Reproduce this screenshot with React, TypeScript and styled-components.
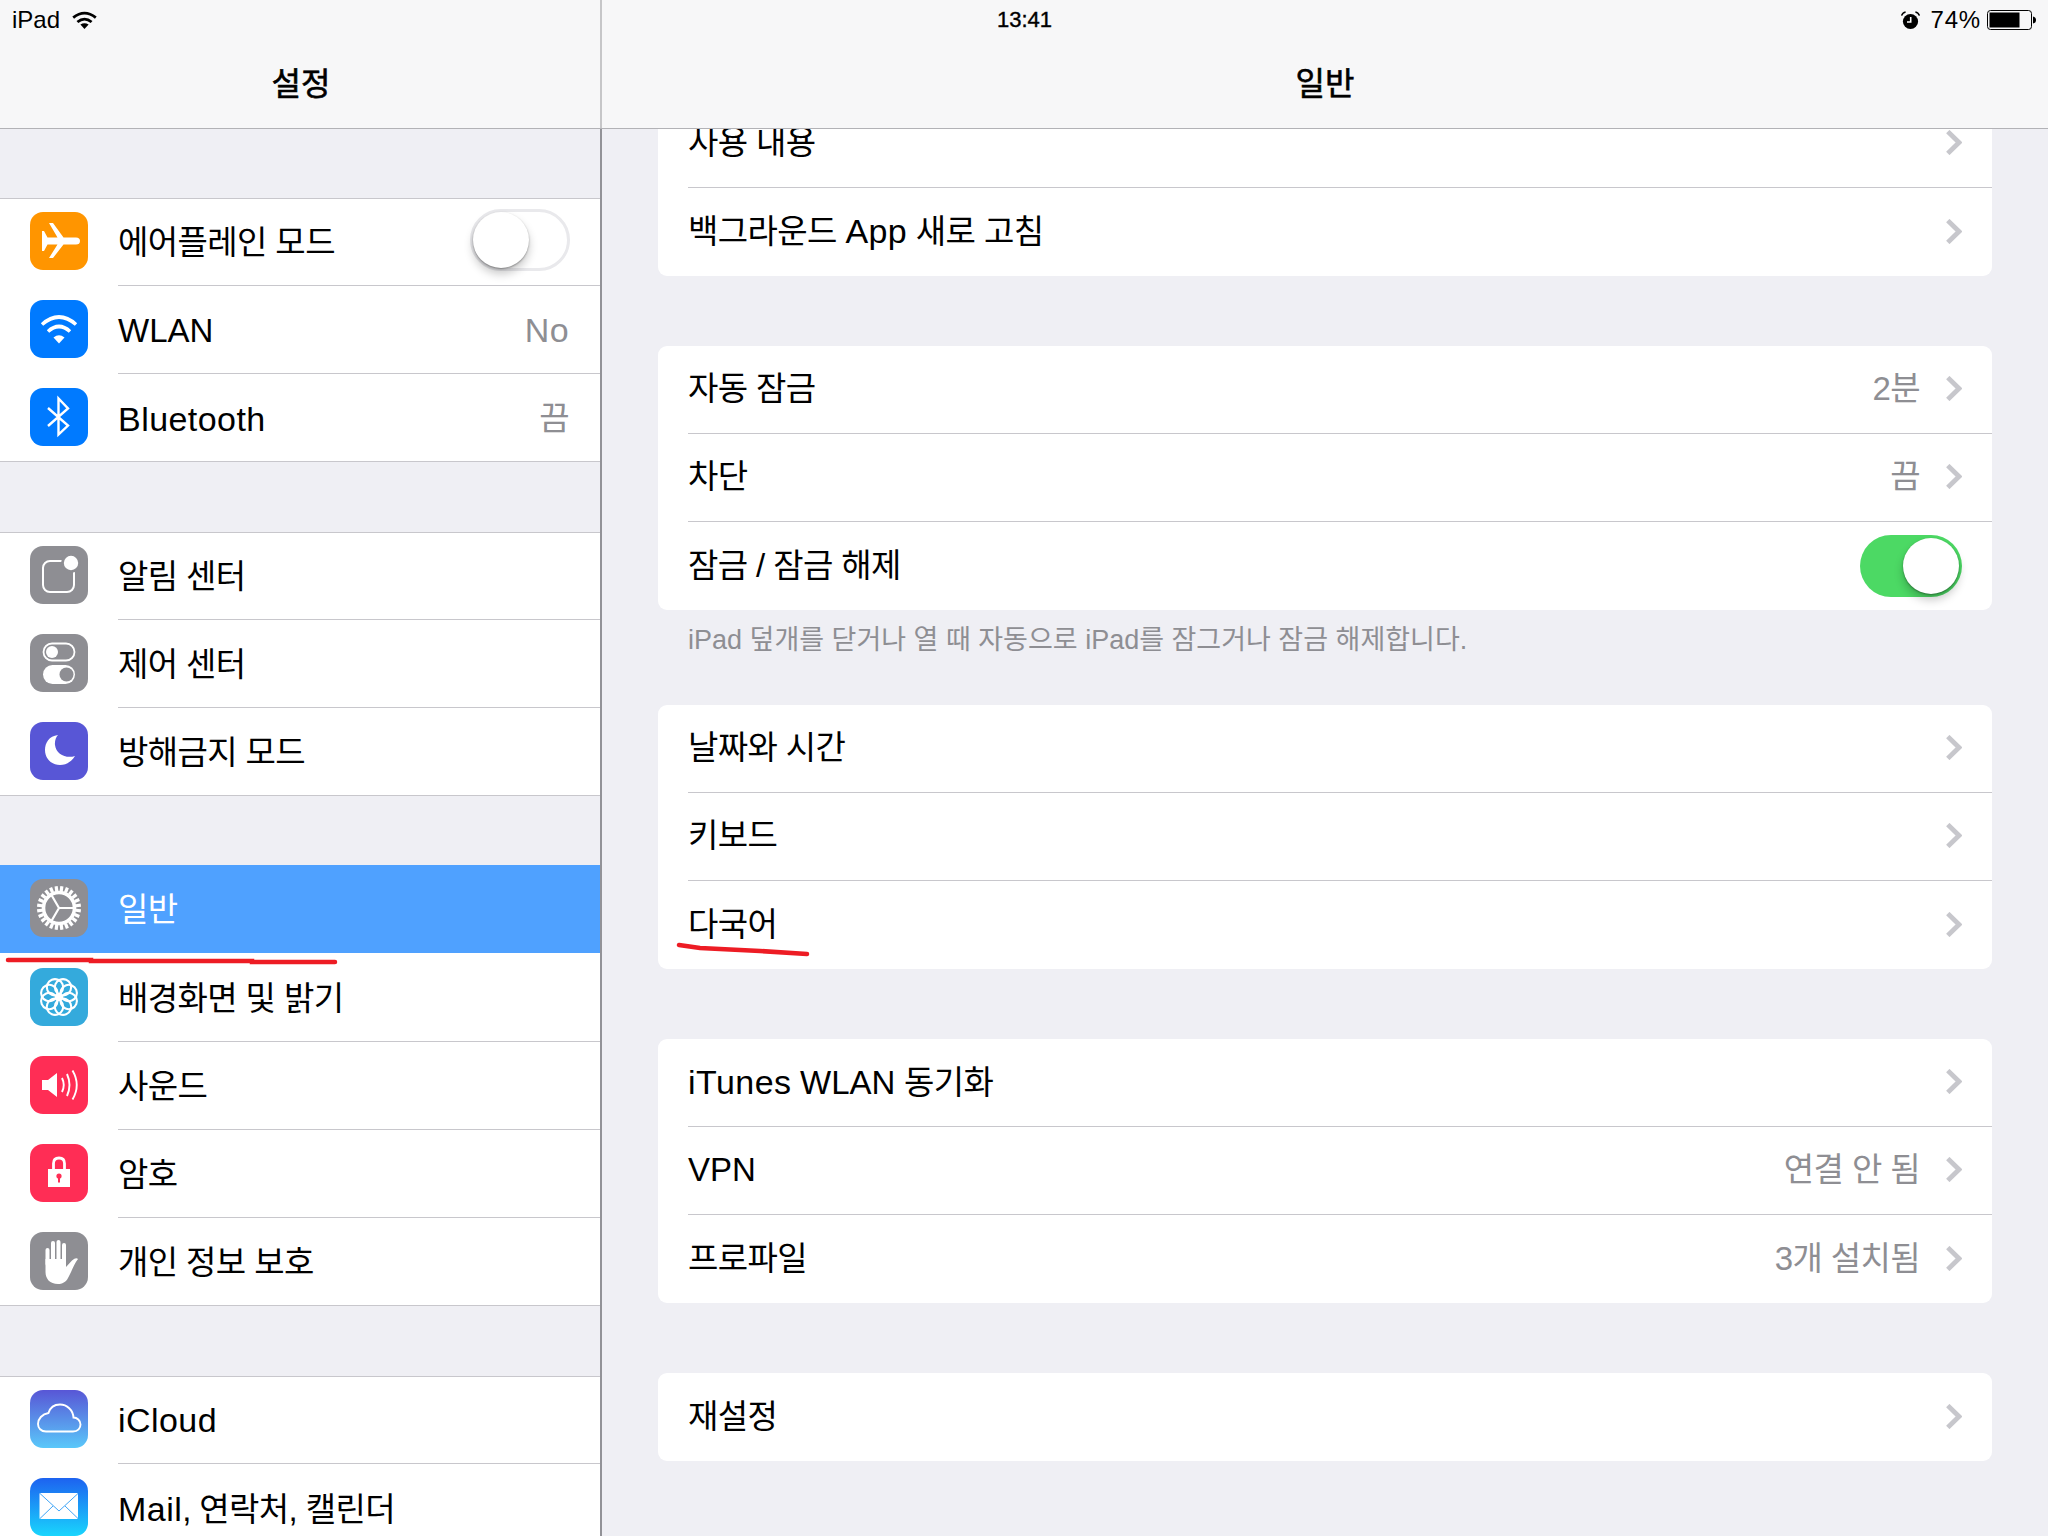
import { ReactNode } from "react"
import styled, { createGlobalStyle } from "styled-components"

const FONT = `"Liberation Sans", "Noto Sans CJK KR", sans-serif`

const GlobalStyle = createGlobalStyle`
  html, body {
    margin: 0;
    padding: 0;
    background: #efeff4;
  }
  * {
    box-sizing: border-box;
  }
`

const Screen = styled.div`
  position: relative;
  width: 2048px;
  height: 1536px;
  overflow: hidden;
  display: flex;
  flex-direction: column;
  font-family: ${FONT};
  color: #000;
  background: #efeff4;
`

const Header = styled.header`
  flex: none;
  height: 129px;
  border-bottom: 1px solid #b2b2b6;
  background: linear-gradient(#c6c6c8, #c6c6c8) 600px 0 / 2px 100% no-repeat, #f7f7f8;
`

const StatusBar = styled.div`
  height: 40px;
  padding: 0 11px 0 12px;
  display: grid;
  grid-template-columns: 1fr auto 1fr;
  align-items: center;
  font-size: 24px;
  line-height: 30px;
`

const StatusGroup = styled.div<{ $end?: boolean }>`
  display: flex;
  align-items: center;
  justify-content: ${p => (p.$end ? "flex-end" : "flex-start")};
  gap: ${p => (p.$end ? "11px" : "12px")};
`

const Clock = styled.span`
  font-size: 22px;
  -webkit-text-stroke: 0.4px #000;
`

const Percent = styled.span`
  margin-right: -5px;
  letter-spacing: 0.8px;
`

const TitleRow = styled.div`
  height: 88px;
  display: grid;
  grid-template-columns: 602px 1fr;
`

const Title = styled.h1`
  margin: 0;
  display: flex;
  align-items: center;
  justify-content: center;
  font-size: 32px;
  font-weight: 400;
  line-height: 40px;
  -webkit-text-stroke: 0.6px #000;
`

const Body = styled.div`
  flex: 1;
  min-height: 0;
  display: grid;
  grid-template-columns: 602px 1fr;
`

const Sidebar = styled.aside`
  overflow: hidden;
  padding-top: 69px;
  border-right: 2px solid #929297;
  display: flex;
  flex-direction: column;
  gap: 70px;
`

const Group = styled.section`
  flex: none;
  background: #fff;
  border-top: 1px solid #c8c7cc;
  & > :first-child {
    margin-top: -1px;
  }
`

const Row = styled.div<{ $selected?: boolean; $last?: boolean }>`
  height: 88px;
  padding-left: 30px;
  display: flex;
  align-items: center;
  gap: 30px;
  font-size: 33px;
  line-height: 40px;
  color: ${p => (p.$selected ? "#fff" : "#000")};
  background: ${p => (p.$selected ? "#4fa1ff" : "transparent")};
  box-shadow: ${p => (p.$last ? "inset 0 -1px #c8c7cc" : "none")};
  &&& {
    margin: ${p => (p.$selected ? "-2px 0 1px" : "")};
  }
`

const RowBody = styled.div<{ $line?: boolean }>`
  flex: 1;
  height: 100%;
  padding: 2px 31px 0 0;
  display: flex;
  align-items: center;
  justify-content: space-between;
  border-bottom: ${p => (p.$line ? "1px solid #c8c7cc" : "none")};
`

const Value = styled.span`
  color: #8e8e93;
`

const Hangul = styled.span`
  letter-spacing: -0.6px;
`

const Word = styled.span`
  font-size: 34px;
  letter-spacing: 0.45px;
`

const IconTile = styled.span<{ $bg: string }>`
  flex: none;
  width: 58px;
  height: 58px;
  margin-top: -2px;
  border-radius: 13px;
  background: ${p => p.$bg};
  color: #fff;
  display: block;
  overflow: hidden;
  svg {
    display: block;
  }
`

const Toggle = styled.span<{ $on?: boolean }>`
  flex: none;
  display: flex;
  align-items: center;
  width: ${p => (p.$on ? "102px" : "100px")};
  height: 62px;
  padding: 0 3px;
  margin: ${p => (p.$on ? "0" : "-6px -1px 0 0")};
  justify-content: ${p => (p.$on ? "flex-end" : "flex-start")};
  border-radius: 31px;
  background: ${p => (p.$on ? "#4cd964" : "#fff")};
  border: ${p => (p.$on ? "none" : "3px solid #e9e9ec")};
`

const Knob = styled.span<{ $on?: boolean }>`
  width: 56px;
  height: 56px;
  margin-left: ${p => (p.$on ? "0" : "-3px")};
  border-radius: 50%;
  background: #fff;
  box-shadow: 0 6px 10px rgba(0, 0, 0, 0.22), 0 1px 2px rgba(0, 0, 0, 0.35);
`

const Main = styled.main`
  overflow: hidden;
  padding: 0 56px;
  display: flex;
  flex-direction: column;
`

const Card = styled.section<{ $top: number }>`
  flex: none;
  margin-top: ${p => p.$top}px;
  background: #fff;
  border-radius: 9px;
`

const CardRow = styled.div`
  height: 88px;
  padding-left: 30px;
  font-size: 33px;
  line-height: 40px;
`

const CardBody = styled(RowBody)`
  padding: 0 30px 1px 0;
`

const Trailing = styled.span`
  display: flex;
  align-items: center;
  gap: 26px;
  svg {
    margin-top: -1px;
  }
`

const Footnote = styled.p`
  flex: none;
  height: 95px;
  margin: 0;
  padding: 14px 0 0 30px;
  font-size: 27px;
  line-height: 32px;
  color: #8e8e93;
`

const Scribbles = styled.svg`
  position: absolute;
  left: 0;
  top: 0;
  pointer-events: none;
`

// Apple's fonts run a little wider on lowercase latin and tighter on hangul
const Label = ({ text }: { text: string }) => (
  <>
    {text.split(/([A-Za-z]+)/).map((part, i) => {
      if (!part) return null
      if (/[a-z]/.test(part)) return <Word key={i}>{part}</Word>
      if (/[A-Z]/.test(part)) return <span key={i}>{part}</span>
      return <Hangul key={i}>{part}</Hangul>
    })}
  </>
)

const TileWifi = () => (
  <svg width="58" height="58" viewBox="0 0 58 58" fill="none" stroke="currentColor" strokeWidth="3.6">
    <path d="M12 24.5Q29 9.5 46 24.5" />
    <path d="M18 31.5Q29 21.5 40 31.5" />
    <path d="M29 43.5L23.5 37.5Q29 33 34.5 37.5Z" fill="currentColor" stroke="none" />
  </svg>
)

const StatusWifi = () => (
  <svg width="25" height="18" viewBox="0 0 25 18" fill="none" stroke="#000" strokeWidth="2.8">
    <path d="M1.2 6.6Q12.5 -2.4 23.8 6.6" />
    <path d="M5.4 11Q12.5 5.2 19.6 11" />
    <path d="M12.5 18L8.4 13.6Q12.5 10.8 16.6 13.6Z" fill="#000" stroke="none" />
  </svg>
)

const Chevron = () => (
  <svg width="16" height="25" viewBox="0 0 16 25" fill="none" stroke="#c7c7cc" strokeWidth="4.8">
    <path d="M1.8 1.6L13 12.5L1.8 23.4" />
  </svg>
)

const Alarm = () => (
  <svg width="19" height="19" viewBox="0 0 19 19">
    <circle cx="9.5" cy="10.5" r="7.6" fill="#000" />
    <path d="M9.7 6V11H6" fill="none" stroke="#fff" strokeWidth="1.6" />
    <path d="M0.6 4.6Q1.6 1.4 4.6 0.9M18.4 4.6Q17.4 1.4 14.4 0.9" fill="none" stroke="#000" strokeWidth="1.5" />
  </svg>
)

const Battery = () => (
  <svg width="50" height="20" viewBox="0 0 50 20">
    <rect x="0.5" y="0.5" width="44" height="19" rx="3" fill="none" stroke="#000" />
    <rect x="2.5" y="2.5" width="30" height="15" fill="#000" />
    <path d="M46 6.5Q49 7 49 10T46 13.5Z" fill="#000" />
  </svg>
)

const Tile = ({ children }: { children: ReactNode }) => (
  <svg width="58" height="58" viewBox="0 0 58 58">{children}</svg>
)

const Airplane = () => (
  <Tile>
    <path fill="#fff" d="M12 19H14L17.5 25.5H27.5L19 11H23L33.5 25.5H46Q50 25.5 50 29T46 32.5H33.5L23 46H19L27.5 32.5H17.5L14 39H12Z" />
  </Tile>
)

const Bluetooth = () => (
  <Tile>
    <path fill="none" stroke="#fff" strokeWidth="2.4" d="M18 20L38 37.5L28.5 46.5V10.5L38 20.5L18 38" />
  </Tile>
)

const Notifications = () => (
  <Tile>
    <rect x="13" y="15" width="31" height="31" rx="7" fill="none" stroke="#fff" strokeWidth="2" />
    <circle cx="41" cy="17" r="10" fill="#8e8e93" />
    <circle cx="41" cy="17" r="7.2" fill="#fff" />
  </Tile>
)

const ControlCenter = () => (
  <Tile>
    <rect x="13.5" y="9.5" width="31" height="17" rx="8.5" fill="none" stroke="#fff" strokeWidth="1.8" />
    <circle cx="22" cy="18" r="6" fill="#fff" />
    <rect x="13" y="31" width="32" height="19" rx="9.5" fill="#fff" />
    <circle cx="36.5" cy="40.5" r="7" fill="#8e8e93" />
  </Tile>
)

const Moon = () => (
  <Tile>
    <path fill="#fff" d="M28 13C19 14 15 21 15 28C15 37 22 43 30 43C37 43 42 39 45 34C36 37 26 32 25 23C24.5 19 26 15 28 13Z" />
  </Tile>
)

const Gear = () => (
  <Tile>
    <g stroke="#fff" fill="none">
      <circle cx="29" cy="29" r="15.5" strokeWidth="3.6" />
      <path strokeWidth="2.2" d="M29 29H45M29 29L21 15.2M29 29L21 42.8" />
      {Array.from({ length: 24 }, (_, i) => (
        <path key={i} strokeWidth="3.2" d="M29 12V7" transform={`rotate(${i * 15 + 7.5} 29 29)`} />
      ))}
    </g>
  </Tile>
)

const Flower = () => (
  <Tile>
    <g fill="none" stroke="#fff" strokeWidth="2.1">
      {Array.from({ length: 8 }, (_, i) => (
        <circle key={i} cx="29" cy="18.5" r="8.2" transform={`rotate(${i * 45 + 22.5} 29 29)`} />
      ))}
    </g>
    <circle cx="29" cy="29" r="3.6" fill="#fff" />
  </Tile>
)

const Sound = () => (
  <Tile>
    <path fill="#fff" d="M12 24H18L27 17V41L18 34H12Z" />
    <g fill="none" stroke="#fff" strokeWidth="1.9">
      <path d="M32 22Q35.5 29 32 36" />
      <path d="M37 18Q42 29 37 40" />
      <path d="M42.5 14.5Q51 29 42.5 43.5" />
    </g>
  </Tile>
)

const Lock = () => (
  <Tile>
    <path fill="none" stroke="#fff" strokeWidth="2.8" d="M23.5 26V19.5Q23.5 14 29 14T34.5 19.5V26" />
    <rect x="18" y="25" width="22" height="18" fill="#fff" />
    <circle cx="29" cy="32" r="2.6" fill="#ff2d55" />
    <rect x="28" y="32" width="2" height="6.5" fill="#ff2d55" />
  </Tile>
)

const Hand = () => (
  <Tile>
    <g stroke="#fff" strokeWidth="4" strokeLinecap="round">
      <path d="M17.5 32V18" />
      <path d="M23 32V11" />
      <path d="M28.5 32V10" />
      <path d="M34 32V13" />
    </g>
    <path fill="#fff" d="M15.5 27H36V35L42 28.5Q46 25 48 27C44 32 41 41 38 46C36 50 32 52 28 52C20 52 15.5 47 15.5 40Z" />
  </Tile>
)

const Cloud = () => (
  <Tile>
    <path fill="none" stroke="#fff" strokeWidth="1.9" d="M16 41.5H43C48 41.5 50.5 38 50.5 34.5C50.5 30.5 47 27.5 43.5 27.5C43 20 37 14.5 30 14.5C24 14.5 20 18 18.5 23C12 24 8 29 8 34C8 38 11 41.5 16 41.5Z" />
  </Tile>
)

const Envelope = () => (
  <Tile>
    <rect x="9.5" y="15" width="38.5" height="26" rx="1" fill="#fff" />
    <path fill="none" stroke="#2a9bf5" strokeWidth="0.9" d="M10 15.5L29 33L48 15.5M10 40.5L23 28M48 40.5L35 28" />
  </Tile>
)

type Item = {
  label: string
  bg: string
  icon: ReactNode
  value?: string
  toggle?: boolean
  selected?: boolean
}

const sidebarGroups: Item[][] = [
  [
    { label: "에어플레인 모드", bg: "#ff9500", icon: <Airplane />, toggle: true },
    { label: "WLAN", bg: "#007aff", icon: <TileWifi />, value: "No" },
    { label: "Bluetooth", bg: "#007aff", icon: <Bluetooth />, value: "끔" },
  ],
  [
    { label: "알림 센터", bg: "#8e8e93", icon: <Notifications /> },
    { label: "제어 센터", bg: "#8e8e93", icon: <ControlCenter /> },
    { label: "방해금지 모드", bg: "#5856d6", icon: <Moon /> },
  ],
  [
    { label: "일반", bg: "#8e8e93", icon: <Gear />, selected: true },
    { label: "배경화면 및 밝기", bg: "#34aadc", icon: <Flower /> },
    { label: "사운드", bg: "#ff2d55", icon: <Sound /> },
    { label: "암호", bg: "#ff2d55", icon: <Lock /> },
    { label: "개인 정보 보호", bg: "#8e8e93", icon: <Hand /> },
  ],
  [
    { label: "iCloud", bg: "linear-gradient(#5856d6, #5ac8fa)", icon: <Cloud /> },
    { label: "Mail, 연락처, 캘린더", bg: "linear-gradient(#1d62f0, #19d5fd)", icon: <Envelope /> },
  ],
]

type Setting = { label: string; value?: string; toggle?: boolean }

const cards: { top: number; note?: string; rows: Setting[] }[] = [
  { top: -29, rows: [{ label: "사용 내용" }, { label: "백그라운드 App 새로 고침" }] },
  {
    top: 70,
    note: "iPad 덮개를 닫거나 열 때 자동으로 iPad를 잠그거나 잠금 해제합니다.",
    rows: [{ label: "자동 잠금", value: "2분" }, { label: "차단", value: "끔" }, { label: "잠금 / 잠금 해제", toggle: true }],
  },
  { top: 0, rows: [{ label: "날짜와 시간" }, { label: "키보드" }, { label: "다국어" }] },
  {
    top: 70,
    rows: [{ label: "iTunes WLAN 동기화" }, { label: "VPN", value: "연결 안 됨" }, { label: "프로파일", value: "3개 설치됨" }],
  },
  { top: 70, rows: [{ label: "재설정" }] },
]

const App = () => (
  <Screen>
    <GlobalStyle />
    <Header>
      <StatusBar>
        <StatusGroup>
          <span>iPad</span>
          <StatusWifi />
        </StatusGroup>
        <Clock>13:41</Clock>
        <StatusGroup $end>
          <Alarm />
          <Percent>74%</Percent>
          <Battery />
        </StatusGroup>
      </StatusBar>
      <TitleRow>
        <Title>설정</Title>
        <Title>일반</Title>
      </TitleRow>
    </Header>

    <Body>
      <Sidebar>
        {sidebarGroups.map((items, g) => (
          <Group key={g}>
            {items.map((item, i) => {
              const last = i === items.length - 1
              return (
                <Row key={item.label} $selected={item.selected} $last={last && g < 3}>
                  <IconTile $bg={item.bg}>{item.icon}</IconTile>
                  <RowBody $line={!last && !item.selected}>
                    <span><Label text={item.label} /></span>
                    {item.value && <Value><Label text={item.value} /></Value>}
                    {item.toggle && (
                      <Toggle>
                        <Knob />
                      </Toggle>
                    )}
                  </RowBody>
                </Row>
              )
            })}
          </Group>
        ))}
      </Sidebar>

      <Main>
        {cards.map(card => (
          <div key={card.rows[0].label}>
            <Card $top={card.top}>
              {card.rows.map((row, i) => (
                <CardRow key={row.label}>
                  <CardBody $line={i < card.rows.length - 1}>
                    <span><Label text={row.label} /></span>
                    {row.toggle ? (
                      <Toggle $on>
                        <Knob $on />
                      </Toggle>
                    ) : (
                      <Trailing>
                        {row.value && <Value><Label text={row.value} /></Value>}
                        <Chevron />
                      </Trailing>
                    )}
                  </CardBody>
                </CardRow>
              ))}
            </Card>
            {card.note && <Footnote>{card.note}</Footnote>}
          </div>
        ))}
      </Main>
    </Body>

    {/* red pen marks drawn on top of the screenshot */}
    <Scribbles width="2048" height="1536" viewBox="0 0 2048 1536" fill="none" stroke="#ed1c24" strokeWidth="4.5" strokeLinecap="round">
      <path d="M8 960H91V961H252V962H335" />
      <path d="M679 945L700 948L760 951L807 954" />
    </Scribbles>
  </Screen>
)

export default App
